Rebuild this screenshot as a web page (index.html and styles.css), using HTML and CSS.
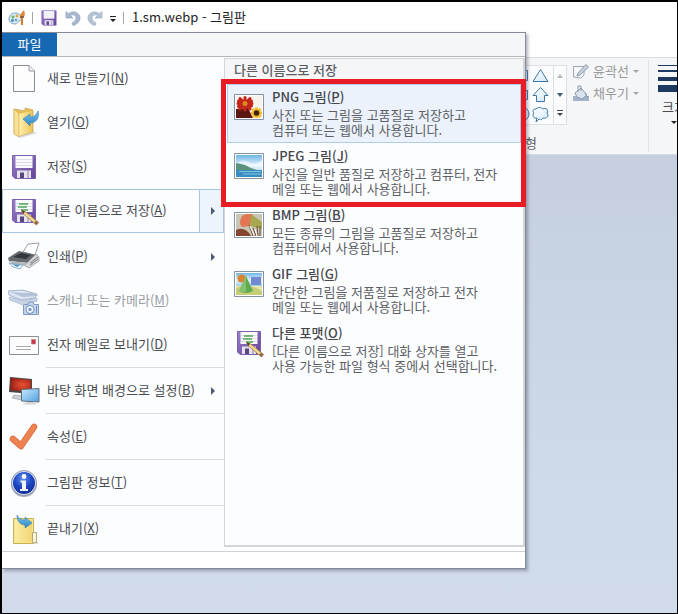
FILE: index.html
```html
<!DOCTYPE html>
<html lang="ko">
<head>
  <meta charset="UTF-8">
  <meta name="viewport" content="width=device-width, initial-scale=1.0">
  <title>1.sm.webp - 그림판</title>
  <link rel="stylesheet" href="styles.css">
</head>
<body>
  <!-- Shared icons -->
  <svg class="defs" width="0" height="0" aria-hidden="true">
    <defs>
      <linearGradient id="gPurple" x1="0" y1="0" x2="1" y2="1"><stop offset="0" stop-color="#9a80c8"/><stop offset="1" stop-color="#634399"/></linearGradient>
      <linearGradient id="gFolder" x1="0" y1="0" x2="1" y2="0"><stop offset="0" stop-color="#fff0b0"/><stop offset="1" stop-color="#eec65a"/></linearGradient>
      <linearGradient id="gBlue" x1="0" y1="0" x2="0" y2="1"><stop offset="0" stop-color="#7cc4ee"/><stop offset="1" stop-color="#2c86c4"/></linearGradient>
      <linearGradient id="gScreen" x1="0" y1="0" x2="1" y2="1"><stop offset="0" stop-color="#c9e9fd"/><stop offset="1" stop-color="#4fa0e0"/></linearGradient>
      <linearGradient id="gShape" x1="0" y1="0" x2="1" y2="1"><stop offset="0" stop-color="#fff"/><stop offset="1" stop-color="#cfe8fb"/></linearGradient>
      <linearGradient id="gSky" x1="0" y1="0" x2="0" y2="1"><stop offset="0" stop-color="#6db5e6"/><stop offset=".5" stop-color="#e6f4fb"/><stop offset="1" stop-color="#8fcbe8"/></linearGradient>
      <radialGradient id="gInfo" cx=".45" cy=".3" r=".75"><stop offset="0" stop-color="#5f8cf0"/><stop offset=".55" stop-color="#1c45c4"/><stop offset="1" stop-color="#0e2c92"/></radialGradient>
      <radialGradient id="gRed" cx=".6" cy=".5" r=".7"><stop offset="0" stop-color="#e8502e"/><stop offset="1" stop-color="#951713"/></radialGradient>
    </defs>
    <symbol id="floppy" viewBox="0 0 32 32">
      <path d="M4.500 4.500H27.500V27.500H7L4.500 25z" fill="url(#gPurple)" stroke="#7a61b0"/>
      <path d="M7.500 5H24.500V17H7.500z" fill="#fbfbfe"/>
      <path d="M8 8.500H24M8 11.500H24M8 14.500H24" stroke="#dcdbe8"/>
      <path d="M9 19.500H23V27H9z" fill="#e6e3ef"/>
      <path d="M12 21.500H16V27H12z" fill="#59477f"/>
      <path d="M20 20V27" stroke="#bbb2d0" stroke-width="2"/>
    </symbol>
    <symbol id="saveas" viewBox="0 0 32 32">
      <use href="#floppy"/>
      <path d="M11 9H20M10 12H19M13 15H20" stroke="#4fa757" stroke-width="1.500"/>
      <path d="M13.500 15.500L17 16.500L30.500 27.500L28.500 30L15.500 19z" fill="#f3d88c" stroke="#a4814d" stroke-width=".8"/>
      <path d="M13 15L17 16.500L15.500 19z" fill="#514126"/>
      <path d="M28 25.500L30.500 27.500L28.500 30L26 28z" fill="#94634c"/>
    </symbol>
  </svg>

  <div class="window">
    <header class="titlebar">
      <svg class="app-icon" width="18" height="18" viewBox="0 0 18 18">
        <path d="M7 4C3 4 1 7 1 10S4 15 7 15C10 15 9 12.500 11 12S14 10 13 7.500 10 4 7 4z" fill="#d9e9f5" stroke="#7aa4c2"/>
        <circle cx="5" cy="8" r="1.400" fill="#68b548"/><circle cx="9" cy="7" r="1.400" fill="#e2a73a"/><circle cx="4.500" cy="11.500" r="1.400" fill="#3c8ac6"/><circle cx="8" cy="11" r="1.300" fill="#789fba"/>
        <path d="M14 8V16" stroke="#d97b2d" stroke-width="2"/><path d="M12 8C12 4 14 4 16 1C17 4 17 6 16 8z" fill="#e08639"/><path d="M12 8H16" stroke="#815032" stroke-width="1.500"/>
      </svg>
      <span class="bar-line"></span>
      <button class="quick" aria-label="저장"><svg width="20" height="20"><use href="#floppy"/></svg></button>
      <button class="quick" aria-label="실행 취소"><svg width="16" height="16" viewBox="0 0 16 16"><path d="M1 1.500V8H8L5.500 5.500C8 4 11 5 11 8C11 10 9.500 12 7 13L8 15.500C12 14.500 15 11.500 15 8C15 2.500 8 0 3.300 3.700z" fill="#a9b8d1" stroke="#91a3c1" stroke-width=".7"/></svg></button>
      <button class="quick" aria-label="다시 실행"><svg width="16" height="16" viewBox="0 0 16 16"><path d="M15 1.500V8H8L10.500 5.500C8 4 5 5 5 8C5 10 6.500 12 9 13L8 15.500C4 14.500 1 11.500 1 8C1 2.500 8 0 12.700 3.700z" fill="#b4c2d5" stroke="#9eafc4" stroke-width=".7"/></svg></button>
      <button class="quick quick-more" aria-label="사용자 지정"><svg width="8" height="8" viewBox="0 0 8 8"><path d="M1 1.500H7" stroke="#222"/><path d="M1 4H7L4 7z" fill="#222"/></svg></button>
      <span class="bar-line"></span>
      <h1 class="title">1.sm.webp - 그림판</h1>
    </header>

    <section class="ribbon">
      <div class="group group-shapes">
        <div class="group-row">
          <div class="gallery">
            <svg class="shapes" width="100" height="58" viewBox="0 0 100 58" fill="url(#gShape)" stroke="#3f75a5">
              <path d="M66.500 4.500H74.500V14.500H66.500zM66.500 24.500H74.500V33.500H66.500z"/>
              <circle cx="69" cy="48" r="7"/>
              <path d="M87.500 3.500L95 15.500H80z"/>
              <path d="M87.500 21.500L95 29.500H91.500V35.500H83.500V29.500H80z"/>
              <path d="M83 43C86 40 89 42 90 43C93 41 96 44 94 47C97 50 93 53 90 52C88 55 87 53 86 53L83 56L84 52C80 53 79 49 81 47C79 45 80 43 83 43z"/>
            </svg>
            <div class="gallery-scroll">
              <button aria-label="위로"><svg width="6" height="4" viewBox="0 0 6 4"><path d="M0 4L3 0L6 4z" fill="#b5b8bd"/></svg></button>
              <button aria-label="아래로"><svg width="6" height="4" viewBox="0 0 6 4"><path d="M0 0L3 4L6 0z" fill="#425d80"/></svg></button>
              <button aria-label="자세히"><svg width="8" height="8" viewBox="0 0 8 8"><path d="M1 .5H7" stroke="#444"/><path d="M1 3H7L4 6z" fill="#444"/></svg></button>
            </div>
          </div>
          <div class="tools">
            <button class="tool" disabled>
              <svg width="16" height="16" viewBox="0 0 16 16"><path d="M.5 3.500H11V12L8 15L.5 14z" fill="#f7f8fb" stroke="#9ca7b6"/><path d="M4 13L5 10L13 1.500L15.500 4L7 12z" fill="#c8d2df" stroke="#8999ad"/></svg>
              윤곽선 <i class="caret"></i>
            </button>
            <button class="tool" disabled>
              <svg width="16" height="16" viewBox="0 0 16 16"><path d="M0 11H16V16H0z" fill="#a3b3c9"/><path d="M2 8L8 3L14 10L9 14L4 12z" fill="#dbe2ec" stroke="#8698b1"/><path d="M5 7V1H8V6M12 8L15 13" fill="none" stroke="#8698b1"/></svg>
              채우기 <i class="caret"></i>
            </button>
          </div>
        </div>
        <span class="group-name">도형</span>
      </div>
      <button class="group group-size">
        <svg width="32" height="28" viewBox="0 0 32 28" fill="#1e395f"><path d="M0 0H32V1H0zM0 5H32V7H0zM0 12H32V16H0zM0 20H32V27H0z"/></svg>
        <span>크기</span>
        <i class="caret caret-dark"></i>
      </button>
    </section>

    <main class="canvas"></main>

    <!-- File menu -->
    <div class="menu">
      <div class="menu-top"><button class="file-tab">파일</button></div>
      <div class="menu-body">
        <nav class="commands">
          <button class="command">
            <svg width="32" height="32" viewBox="0 0 32 32"><path d="M5.500 2.500H21L26.500 8V28.500H5.500z" fill="#fdfdfd" stroke="#898c90"/><path d="M21 2.500V8H26.500" fill="#eee" stroke="#9b9da0"/></svg>
            <span>새로 만들기(<u>N</u>)</span>
          </button>
          <button class="command">
            <svg width="32" height="32" viewBox="0 0 32 32"><path d="M5 27L24 24L29 26L12 31z" fill="#d8d9da"/><path d="M6 2L17 4V1L25 3V25L11 29L6 26z" fill="#e9be57" stroke="#c9a04b" stroke-width=".7"/><path d="M11 7L24 4V25L11 29z" fill="url(#gFolder)"/><path d="M6 2L11 7V30L6 27z" fill="#f8df91" stroke="#d2ac54" stroke-width=".6"/><path d="M15 12L22 7V10C26 10 28 8 30 4C32 11 28 16 22 16V19z" fill="url(#gBlue)" stroke="#3783b7" stroke-width=".6"/></svg>
            <span>열기(<u>O</u>)</span>
          </button>
          <button class="command">
            <svg width="32" height="32"><use href="#floppy"/></svg>
            <span>저장(<u>S</u>)</span>
          </button>
          <button class="command command-open">
            <svg width="32" height="32"><use href="#saveas"/></svg>
            <span>다른 이름으로 저장(<u>A</u>)</span>
            <i class="arrow"></i>
          </button>
          <hr class="sep sep-blank">
          <button class="command">
            <svg width="32" height="32" viewBox="0 0 32 32"><path d="M15 11L20 3L31 2L27 14z" fill="#fff" stroke="#9c9ea2"/><path d="M0 17L11 10L28 14L21 22L1 20z" fill="#66696d"/><path d="M5 16L13 12L23 14L18 18z" fill="#34383c"/><path d="M21 20L28 13L31 16V20L21 27L16 24z" fill="#d6d7da" stroke="#8d9094" stroke-width=".7"/><path d="M22 22L30 16M22 24L30 18" stroke="#777b80"/><path d="M1 20L20 22L17 25L5 24z" fill="#b6bac0"/><path d="M1 22L15 24L12 28L5 26z" fill="#e5f2fb" stroke="#6c93b2" stroke-width=".7"/><path d="M4 23L12 24L9 26z" fill="#4a91c4"/></svg>
            <span>인쇄(<u>P</u>)</span>
            <i class="arrow"></i>
          </button>
          <button class="command" disabled>
            <svg width="32" height="32" viewBox="0 0 32 32"><path d="M0 6L14 5L29 9L27 13L13 15L1 10z" fill="#dbe4f0" stroke="#a4b5cd"/><path d="M2 7L14 8L28 8L30 11L15 12z" fill="#b4c3da"/><path d="M1 12L16 16L29 13V16L15 20L2 15z" fill="#c7d4e6" stroke="#a4b5cd" stroke-width=".7"/><path d="M16.500 19.500H20L21 17H25L26 19.500H30.500V29.500H15.500V20z" fill="#c2d2e9" stroke="#809bc3"/><circle cx="22" cy="24.500" r="4" fill="#f3f7fd" stroke="#6f90c0"/><circle cx="22" cy="24.500" r="1.700" fill="#7e9cc9"/><path d="M28.500 21V28" stroke="#7791ba"/></svg>
            <span>스캐너 또는 카메라(<u>M</u>)</span>
          </button>
          <button class="command">
            <svg width="32" height="32" viewBox="0 0 32 32"><path d="M1.500 7.500H30.500V25.500H1.500z" fill="#fcfcfd" stroke="#8d8f93"/><path d="M23.500 10.500H27.500V15H23.500z" fill="#cf3540" stroke="#b98086" stroke-width=".7"/><path d="M8 17.500H23M8 20.500H23" stroke="#aaa"/></svg>
            <span>전자 메일로 보내기(<u>D</u>)</span>
          </button>
          <hr class="sep">
          <button class="command">
            <svg width="32" height="32" viewBox="0 0 32 32"><path d="M2 2L24 4V19L1 17z" fill="#4b4648"/><path d="M3 3L23 5V17L2.500 15z" fill="url(#gRed)"/><path d="M5 6L20 12M6 12L17 5M12 4L14 15" stroke="#d7563a" stroke-width=".7" opacity=".6"/><path d="M6 20L14 21V25L4 23z" fill="#cfd2d5" stroke="#9c9fa4" stroke-width=".7"/><path d="M13.500 14.500L31 13.500V27L13.500 26z" fill="url(#gScreen)" stroke="#646e7b"/><path d="M19 27H25L29 29.500H14z" fill="#d0d3d7"/></svg>
            <span>바탕 화면 배경으로 설정(<u>B</u>)</span>
            <i class="arrow"></i>
          </button>
          <hr class="sep">
          <button class="command">
            <svg width="32" height="32" viewBox="0 0 32 32"><path d="M5 18L13 25L26 6" fill="none" stroke="#d66a3c" stroke-width="6.500" stroke-linecap="round" stroke-linejoin="round"/><path d="M5 18L13 25L26 6" fill="none" stroke="#ee8251" stroke-width="5" stroke-linecap="round" stroke-linejoin="round"/></svg>
            <span>속성(<u>E</u>)</span>
          </button>
          <hr class="sep">
          <button class="command">
            <svg width="32" height="32" viewBox="0 0 32 32"><circle cx="16" cy="17" r="13" fill="#a9adb7"/><circle cx="16" cy="16" r="12.500" fill="#dfe3ec" stroke="#7b86a4" stroke-width=".8"/><circle cx="16" cy="16" r="11" fill="url(#gInfo)"/><circle cx="16" cy="9.500" r="2.400" fill="#fff"/><path d="M12.500 13.500H18V22H20V24H12V22H14V15.500H12.500z" fill="#f2f5fc"/></svg>
            <span>그림판 정보(<u>T</u>)</span>
          </button>
          <hr class="sep">
          <button class="command">
            <svg width="32" height="32" viewBox="0 0 32 32"><path d="M5.500 5.500H25.500V30.500H5.500z" fill="#f7e791" stroke="#c9b152"/><path d="M7 7H24V29H7z" fill="url(#gFolder)" opacity=".5"/><path d="M24.500 19.500H28.500V29.500H24.500z" fill="#faf5d8" stroke="#b7a676"/><path d="M25 30H30" stroke="#bbb8ad"/><path d="M9 2C11 6 14 7 17 7V4L24 10L17 15V12C12 12 9 8 9 2z" fill="url(#gBlue)" stroke="#3783b7" stroke-width=".6"/></svg>
            <span>끝내기(<u>X</u>)</span>
          </button>
        </nav>

        <section class="formats">
          <h2 class="formats-title">다른 이름으로 저장</h2>
          <button class="format format-active">
            <svg width="32" height="32" viewBox="0 0 32 32"><path d="M1.500 3.500H30.500V28.500H1.500z" fill="#fff" stroke="#8792a0"/><path d="M3 5H29V27H3z" fill="#f8f2ec"/><path d="M3 18L15 17L20 27H3z" fill="#5d1712"/><g stroke="#c42319" stroke-width="3" stroke-linecap="round"><path d="M5 12.500H19M12 6.500V19M7 7.500L17 18M17 7.500L7 18M5.500 10L18.500 15M5.500 15.500L18.500 10"/></g><circle cx="12" cy="12.500" r="2.500" fill="#d88d20"/><g stroke="#f2ba2c" stroke-width="3"><path d="M18 22H29M23.500 16.500V27M19.500 18L27.500 26M27.500 18L19.500 26"/></g><circle cx="23.500" cy="22" r="2.800" fill="#3d2411"/></svg>
            <span class="format-text"><b>PNG 그림(<u>P</u>)</b><span>사진 또는 그림을 고품질로 저장하고<br>컴퓨터 또는 웹에서 사용합니다.</span></span>
          </button>
          <button class="format">
            <svg width="32" height="32" viewBox="0 0 32 32"><path d="M1.500 3.500H30.500V28.500H1.500z" fill="#fff" stroke="#8792a0"/><path d="M3 5H29V27H3z" fill="url(#gSky)"/><path d="M3 14Q10 8 16 12T29 10V16H3z" fill="#fff" opacity=".5"/><path d="M3 13L8 14L12 15L18 18L24 20H3z" fill="#5c927c"/><path d="M3 20H29V27H3z" fill="#3a8dc0"/><path d="M6 21.500H28M10 24H29" stroke="#7cc3e0"/></svg>
            <span class="format-text"><b>JPEG 그림(<u>J</u>)</b><span>사진을 일반 품질로 저장하고 컴퓨터, 전자<br>메일 또는 웹에서 사용합니다.</span></span>
          </button>
          <button class="format">
            <svg width="32" height="32" viewBox="0 0 32 32"><path d="M1.500 3.500H30.500V28.500H1.500z" fill="#fff" stroke="#8792a0"/><path d="M3 5H29V27H3z" fill="#c9c5b5"/><path d="M7 15Q7 5 14 5H20L17 17L9 18z" fill="#e37654"/><path d="M18 5L29 13V20L17 17z" fill="#a7a950"/><path d="M3 21Q12 17 18 27H3z" fill="#854531"/><path d="M16 16L20 27M20 19L23 27M24 17L25 27M27 17L27 27" stroke="#704b38"/><path d="M17 17L21 26M22 20L24 27" stroke="#fff"/></svg>
            <span class="format-text"><b>BMP 그림(<u>B</u>)</b><span>모든 종류의 그림을 고품질로 저장하고<br>컴퓨터에서 사용합니다.</span></span>
          </button>
          <button class="format">
            <svg width="32" height="32" viewBox="0 0 32 32"><path d="M1.500 3.500H30.500V28.500H1.500z" fill="#fff" stroke="#8792a0"/><path d="M3 5H29V19H3z" fill="url(#gSky)"/><path d="M3 18H29V27H3z" fill="#e6e5a8"/><path d="M18 9H28V17H18z" fill="#7389d2"/><path d="M3 20Q16 15 29 23V27H3z" fill="#c5ce77"/><circle cx="8.500" cy="10.500" r="4" fill="#d78532"/><path d="M13 8L20 23Q13 27 6 23z" fill="#61aa4f"/><path d="M13 8L13 24Q9 25 6 23z" fill="#86c172"/></svg>
            <span class="format-text"><b>GIF 그림(<u>G</u>)</b><span>간단한 그림을 저품질로 저장하고 전자<br>메일 또는 웹에서 사용합니다.</span></span>
          </button>
          <button class="format">
            <svg width="32" height="32"><use href="#saveas"/></svg>
            <span class="format-text"><b>다른 포맷(<u>O</u>)</b><span>[다른 이름으로 저장] 대화 상자를 열고<br>사용 가능한 파일 형식 중에서 선택합니다.</span></span>
          </button>
          <div class="marker"></div>
        </section>
      </div>
      <div class="menu-foot"></div>
    </div>
  </div>
</body>
</html>
```

FILE: styles.css
```css
* {
  box-sizing: border-box;
}

body {
  margin: 0;
  font-family: "Noto Sans CJK KR", sans-serif;
  font-size: 13px;
  line-height: 16px;
  color: #4a4c51;
}

button {
  margin: 0;
  padding: 0;
  border: 0;
  background: none;
  color: inherit;
  font: inherit;
  text-align: left;
}

svg {
  display: block;
  flex: none;
}

.defs {
  position: absolute;
}

.window {
  position: relative;
  display: flex;
  flex-direction: column;
  min-height: 100vh;
  overflow: hidden;
  border: 1px solid #000;
  border-width: 2px 1px 1px 2px;
  background: #fff;
}

/* Title bar */
.titlebar {
  display: flex;
  align-items: center;
  height: 31px;
  padding-left: 6px;
  gap: 6px;
  margin-bottom: 24px;
}

.bar-line {
  width: 1px;
  height: 12px;
  background: #a5a5a5;
}

.quick-more {
  padding: 2px 0 0;
}

.title {
  margin: 0 0 0 2px;
  padding-bottom: 2px;
  font-size: 13px;
  font-weight: 400;
  color: #222;
}

/* Ribbon */
.ribbon {
  display: flex;
  height: 98px;
  padding-left: 400px;
  background: #f5f6f7;
  border-top: 1px solid #dadbdc;
  border-bottom: 1px solid #d5d9e0;
}

.group {
  flex: none;
  display: flex;
  flex-direction: column;
  align-items: center;
}

.group-shapes {
  width: 247px;
  margin: 2px 0;
  border-right: 1px solid #e0e2e5;
}

.group-row {
  display: flex;
  align-self: flex-end;
  gap: 6px;
  margin-right: 9px;
}

.gallery {
  display: flex;
  margin-top: 5px;
  background: #fbfcfe;
  border: 1px solid #dcdfe4;
}

.gallery-scroll {
  display: flex;
  flex-direction: column;
  width: 13px;
  border-left: 1px solid #dcdfe4;
}

.gallery-scroll button {
  flex: 1;
  display: flex;
  align-items: center;
  justify-content: center;
}

.tools {
  display: flex;
  flex-direction: column;
}

.tool {
  display: flex;
  align-items: center;
  gap: 4px;
  height: 22px;
  color: #9a9a9a;
}

.caret {
  border: 3px solid transparent;
  border-top-color: #a5a5a5;
  border-bottom: 0;
}

.caret-dark {
  border-top-color: #222;
}

.group-name {
  margin-top: 10px;
  color: #5c5f64;
}

.group-size {
  width: 50px;
  padding-top: 7px;
  gap: 6px;
}

.canvas {
  flex: 1;
  background: linear-gradient(#c5cfdf, #cfdae8 70%, #d1dbe9);
}

/* File menu */
.menu {
  position: absolute;
  top: 30px;
  left: 0;
  width: 524px;
  background: #fcfdff;
  border: 1px solid #858a99;
  border-left: 0;
  box-shadow: 2px 2px 3px rgba(60, 70, 90, .4);
}

.menu-top {
  display: flex;
  height: 24px;
  background: #f5f6f7;
  border-bottom: 1px solid #b4b6ba;
}

.file-tab {
  width: 55px;
  padding-bottom: 2px;
  background: #1768b2;
  color: #fff;
  text-align: center;
}

.menu-body {
  display: flex;
  border-bottom: 1px solid #cfd0d3;
}

.commands {
  flex: none;
  display: flex;
  flex-direction: column;
  width: 222px;
}

.command {
  display: flex;
  align-items: center;
  gap: 7px;
  height: 44px;
  padding: 0 9px 0 6px;
}

.command span {
  padding-bottom: 2px;
}

.command:disabled {
  color: #9b9da2;
}

.command-open {
  background: linear-gradient(to right, transparent 197px, #a9c4e2 197px, #a9c4e2 198px, #edf4fc 198px);
  box-shadow: inset 0 0 0 1px #a9c4e2;
}

.arrow {
  margin-left: auto;
  border: 4px solid transparent;
  border-left-color: #4c5a72;
  border-right: 0;
}

.sep {
  width: 178px;
  height: 2px;
  margin: 0 0 0 auto;
  border: 0;
  border-top: 1px solid #d8dbe1;
}

.sep-blank {
  border-color: transparent;
}

.formats {
  flex: 1;
  position: relative;
  margin: 1px 0 4px;
  padding: 0 2px;
  border: 1px solid #d3d5da;
  border-width: 1px 2px 2px 1px;
}

.formats-title {
  height: 25px;
  margin: 0 -2px;
  padding: 3px 9px;
  background: #f5f6f8;
  font-size: 13px;
  font-weight: 500;
  color: #5c5e63;
}

.format {
  display: flex;
  gap: 7px;
  width: 100%;
  height: 59px;
  padding: 4px 5px 0;
  border: 1px solid transparent;
  white-space: nowrap;
}

.format svg {
  margin-top: 2px;
}

.format-active {
  background: #ebf2fb;
  border-color: #b2cdec;
}

.format-text {
  display: flex;
  flex-direction: column;
  color: #5c5f66;
  line-height: 15px;
}

.format-text b {
  margin-bottom: 3px;
  font-weight: 500;
  color: #44464b;
}

/* Highlight frame around the first two formats */
.marker {
  position: absolute;
  top: 20px;
  left: -4px;
  right: -3px;
  height: 128px;
  border: 5px solid #e81c24;
  pointer-events: none;
}

.menu-foot {
  height: 16px;
  background: #fff;
}
```
